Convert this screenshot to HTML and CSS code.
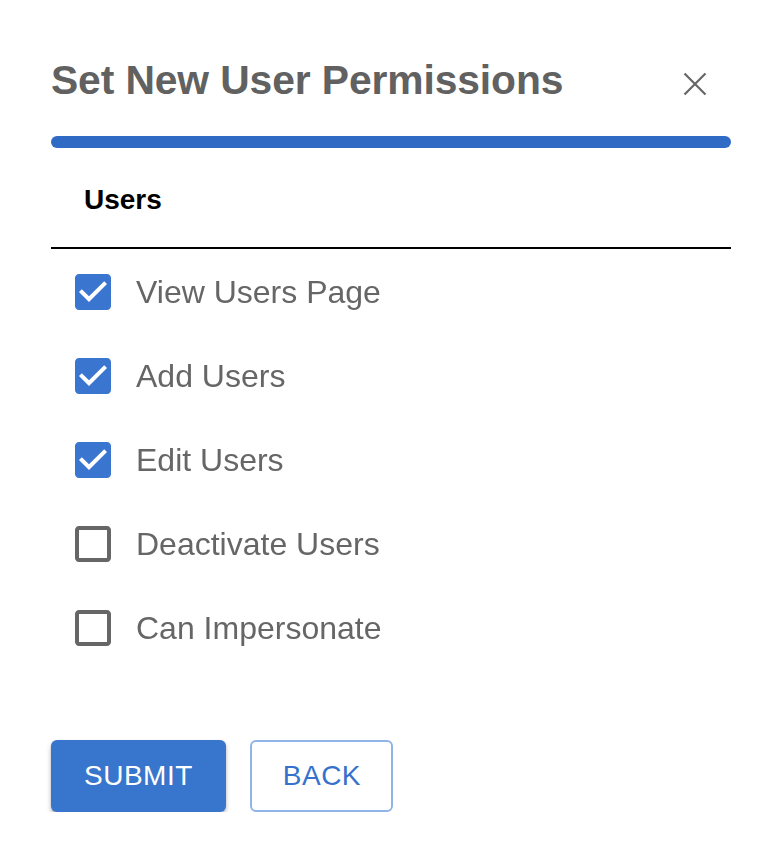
FILE: index.html
```html
<!DOCTYPE html>
<html lang="en">
<head>
<meta charset="utf-8">
<title>Set New User Permissions</title>
<link rel="stylesheet" href="styles.css">
</head>
<body>
<div class="dialog">
  <div class="header">
    <h1 class="title">Set New User Permissions</h1>
    <button class="close" aria-label="Close">
      <svg width="24" height="24" viewBox="0 0 24 24"><path d="M1.5 1.5 L22.5 22.5 M22.5 1.5 L1.5 22.5" stroke="#666" stroke-width="2.2" fill="none"/></svg>
    </button>
  </div>
  <div class="progress"></div>
  <div class="tabs"><span class="tab">Users</span></div>
  <div class="list">
    <label class="row">
      <svg class="cb" width="36" height="36" viewBox="3 3 18 18"><path class="on" d="M19 3H5c-1.11 0-2 .9-2 2v14c0 1.1.89 2 2 2h14c1.110 0 2-.9 2-2V5c0-1.1-.89-2-2-2zm-9 14l-5-5 1.41-1.41L10 14.17l7.59-7.59L19 8l-9 9z"/></svg>
      <span class="label">View Users Page</span>
    </label>
    <label class="row">
      <svg class="cb" width="36" height="36" viewBox="3 3 18 18"><path class="on" d="M19 3H5c-1.11 0-2 .9-2 2v14c0 1.1.89 2 2 2h14c1.11 0 2-.9 2-2V5c0-1.1-.89-2-2-2zm-9 14l-5-5 1.41-1.41L10 14.17l7.59-7.59L19 8l-9 9z"/></svg>
      <span class="label">Add Users</span>
    </label>
    <label class="row">
      <svg class="cb" width="36" height="36" viewBox="3 3 18 18"><path class="on" d="M19 3H5c-1.11 0-2 .9-2 2v14c0 1.1.89 2 2 2h14c1.11 0 2-.9 2-2V5c0-1.1-.89-2-2-2zm-9 14l-5-5 1.41-1.41L10 14.17l7.59-7.59L19 8l-9 9z"/></svg>
      <span class="label">Edit Users</span>
    </label>
    <label class="row">
      <svg class="cb" width="36" height="36" viewBox="3 3 18 18"><path class="off" d="M19 5v14H5V5h14m0-2H5c-1.1 0-2 .9-2 2v14c0 1.1.9 2 2 2h14c1.1 0 2-.9 2-2V5c0-1.1-.9-2-2-2z"/></svg>
      <span class="label">Deactivate Users</span>
    </label>
    <label class="row">
      <svg class="cb" width="36" height="36" viewBox="3 3 18 18"><path class="off" d="M19 5v14H5V5h14m0-2H5c-1.1 0-2 .9-2 2v14c0 1.1.9 2 2 2h14c1.1 0 2-.9 2-2V5c0-1.1-.9-2-2-2z"/></svg>
      <span class="label">Can Impersonate</span>
    </label>
    <label class="row">
      <svg class="cb" width="36" height="36" viewBox="3 3 18 18"><path class="off" d="M19 5v14H5V5h14m0-2H5c-1.1 0-2 .9-2 2v14c0 1.1.9 2 2 2h14c1.1 0 2-.9 2-2V5c0-1.1-.9-2-2-2z"/></svg>
      <span class="label">Manage Users</span>
    </label>
  </div>
  <div class="actions">
    <button class="btn btn-primary">Submit</button>
    <button class="btn btn-outline">Back</button>
  </div>
</div>
</body>
</html>
```

FILE: styles.css
```css
html, body {
  margin: 0;
  padding: 0;
  background: #ffffff;
}

body {
  font-family: "Liberation Sans", Arial, sans-serif;
}

.dialog {
  width: 680px;
  margin-left: 51px;
  padding-top: 57px;
}

.header {
  display: flex;
  justify-content: space-between;
  align-items: flex-start;
}

.title {
  margin: 0;
  font-size: 40.8px;
  line-height: 47px;
  font-weight: 700;
  color: #616161;
  letter-spacing: -0.1px;
}

.close {
  margin: 15px 24px 0 0;
  padding: 0;
  border: 0;
  background: none;
  width: 24px;
  height: 24px;
  display: block;
}

.close svg {
  display: block;
}

.progress {
  margin-top: 32px;
  height: 12px;
  border-radius: 6px;
  background: #2f6bc4;
}

.tabs {
  padding: 35px 0 30px 33px;
  border-bottom: 2px solid #000000;
}

.tab {
  display: block;
  font-size: 28px;
  line-height: 34px;
  font-weight: 700;
  color: #000000;
}

.list {
  height: 459px;
  overflow: hidden;
  padding-top: 1px;
  box-sizing: border-box;
  -webkit-mask-image: linear-gradient(to bottom, #000 0, #000 calc(100% - 62px), transparent calc(100% - 14px));
  mask-image: linear-gradient(to bottom, #000 0, #000 calc(100% - 62px), transparent calc(100% - 14px));
}

.row {
  display: flex;
  align-items: center;
  height: 84px;
  padding-left: 24px;
  gap: 25px;
}

.cb {
  display: block;
  flex: none;
}

.cb .on {
  fill: #3a75cf;
}

.cb .off {
  fill: #666666;
}

.label {
  font-size: 32px;
  line-height: 38px;
  color: #666666;
}

.actions {
  display: flex;
  gap: 24px;
  margin-top: 32px;
}

.btn {
  box-sizing: border-box;
  height: 72px;
  border-radius: 6px;
  font-family: "Liberation Sans", Arial, sans-serif;
  font-size: 28px;
  letter-spacing: 0.5px;
  text-transform: uppercase;
  cursor: pointer;
}

.btn-primary {
  padding: 0 33px;
  border: 0;
  background: #3875cc;
  color: #ffffff;
  box-shadow: 0 3px 5px rgba(0, 0, 0, 0.25), 0 1px 2px rgba(0, 0, 0, 0.12);
}

.btn-outline {
  padding: 0 30px 0 31px;
  border: 2px solid #91b4e8;
  background: #ffffff;
  color: #3672cc;
}
```
